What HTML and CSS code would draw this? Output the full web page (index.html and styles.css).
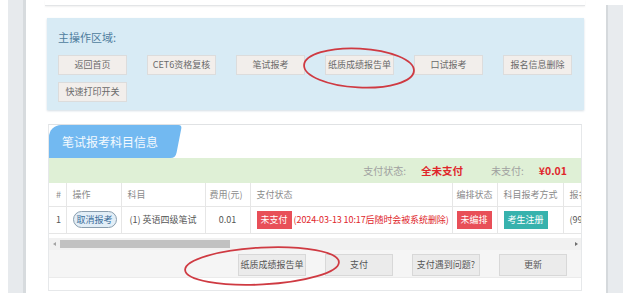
FILE: index.html
```html
<!DOCTYPE html>
<html lang="zh-CN">
<head>
<meta charset="utf-8">
<title>主操作区域</title>
<link rel="stylesheet" href="styles.css">
</head>
<body>
<div class="page">
  <div class="gutter-l"></div>
  <div class="rail-l"></div>
  <main class="main">
    <div class="topcard"></div>
    <section class="opbox">
      <div class="op-title">主操作区域:</div>
      <div class="op-buttons">
        <span class="btn">返回首页</span>
        <span class="btn">CET6资格复核</span>
        <span class="btn">笔试报考</span>
        <span class="btn">纸质成绩报告单</span>
        <span class="btn">口试报考</span>
        <span class="btn">报名信息删除</span>
        <span class="btn">快速打印开关</span>
      </div>
    </section>

    <section class="card">
      <div class="tab">
        <div class="tab-body">笔试报考科目信息</div>
        <svg class="tab-edge" width="12" height="33" viewBox="0 0 12 33"><path d="M0 0 H8.5 Q12 0 11.3 3.5 L6.6 27.5 Q5.6 33 0.5 33 H0 Z" fill="#72b9f1"/></svg>
      </div>
      <div class="paybar">
        <span class="pb-label">支付状态:</span>
        <span class="pb-value">全未支付</span>
        <span class="pb-label pb-gap">未支付:</span>
        <span class="pb-value">¥0.01</span>
      </div>
      <div class="tablewrap">
        <table class="grid">
          <colgroup>
            <col class="c1"><col class="c2"><col class="c3"><col class="c4"><col class="c5"><col class="c6"><col class="c7"><col class="c8">
          </colgroup>
          <thead>
            <tr><th>#</th><th>操作</th><th>科目</th><th class="tight">费用(元)</th><th>支付状态</th><th class="tight">编排状态</th><th>科目报考方式</th><th>报名时间</th></tr>
          </thead>
          <tbody>
            <tr>
              <td>1</td>
              <td><span class="pill">取消报考</span></td>
              <td class="center">(1) 英语四级笔试</td>
              <td class="center">0.01</td>
              <td class="nowrap"><span class="lbl red">未支付</span> <span class="warn">(2024-03-13 10:17后随时会被系统删除)</span></td>
              <td class="tight"><span class="lbl red">未编排</span></td>
              <td><span class="lbl teal">考生注册</span></td>
              <td class="nowrap">(9999)</td>
            </tr>
          </tbody>
        </table>
      </div>
      <div class="scrollbar">
        <span class="arrow left"></span>
        <span class="track"><span class="thumb"></span></span>
        <span class="arrow right"></span>
      </div>
      <div class="actions">
        <span class="btn2">纸质成绩报告单</span>
        <span class="btn2">支付</span>
        <span class="btn2">支付遇到问题?</span>
        <span class="btn2">更新</span>
      </div>
      <div class="card-foot"></div>
    </section>
  </main>
  <div class="rail-r"></div>
</div>
<svg class="marks" width="627" height="300" viewBox="0 0 627 300">
  <ellipse cx="359" cy="68" rx="55" ry="19.5" fill="none" stroke="#cf3a42" stroke-width="1.8" transform="rotate(3 359 68)"/>
  <ellipse cx="262" cy="266" rx="77" ry="18.5" fill="none" stroke="#cf3a42" stroke-width="1.8" transform="rotate(-3 262 266)"/>
</svg>
</body>
</html>
```
FILE: styles.css
```css
* { box-sizing: border-box; }
html, body { margin: 0; padding: 0; background: #fff; }
body {
  font-family: "Noto Sans CJK SC", "Noto Sans", "Liberation Sans", sans-serif;
  width: 627px;
  height: 300px;
  overflow: hidden;
  position: relative;
}
.page {
  display: flex;
  height: 300px;
}
.gutter-l { width: 8px; flex: none; }
.rail-l {
  width: 18px;
  flex: none;
  background: #e7eaed;
  border-right: 3px solid #d7dbde;
  margin-bottom: 7px;
}
.main {
  width: 580px;
  flex: none;
  padding: 0 22px 0 21px;
}
.rail-r {
  width: 17px;
  flex: none;
  background: #e8ebee;
  border-left: 2px solid #d5d9dc;
  margin: 5px 0 7px;
}
.topcard {
  height: 6px;
  margin: 0 -1px 0 -2px;
  border-bottom: 1px solid #e3e5e7;
  box-shadow: 0 1px 2px rgba(0,0,0,0.06);
}
.opbox {
  margin-top: 12px;
  height: 92px;
  background: #d8ebf5;
  padding: 12px 11px 8px;
  box-shadow: 0 1px 2px rgba(80,120,150,0.25);
}
.op-title {
  font-size: 11px;
  line-height: 14px;
  color: #4f7d9e;
}
.op-buttons {
  margin-top: 11px;
  display: flex;
  flex-wrap: wrap;
  column-gap: 20px;
  row-gap: 7px;
}
.btn {
  width: 69px;
  height: 20px;
  background: #f2eeeb;
  border: 1px solid #dcdcdc;
  font-size: 9px;
  line-height: 18px;
  text-align: center;
  color: #6a6a6a;
  white-space: nowrap;
}
.card {
  margin-top: 14px;
  margin-left: 1px;
  width: 534px;
  border: 1px solid #e6e8ea;
  border-top-color: #e0e2e4;
}
.tab {
  display: flex;
  height: 33px;
}
.tab-body {
  width: 121px;
  height: 33px;
  background: #72b9f1;
  border-top-left-radius: 12px;
  color: #f4f9fe;
  font-size: 12px;
  line-height: 33px;
  padding-left: 13px;
  white-space: nowrap;
}
.tab-edge { display: block; }
.paybar {
  height: 25px;
  background: #dff0d6;
  display: flex;
  justify-content: flex-end;
  align-items: center;
  padding-right: 14px;
  font-size: 10px;
}
.pb-label { color: #a0a0a0; margin-right: 15px; }
.pb-gap { margin-left: 28px; }
.pb-value { color: #e0262b; font-weight: bold; font-size: 10.5px; }
.tablewrap {
  overflow: hidden;
  width: 532px;
}
.grid {
  border-collapse: collapse;
  table-layout: fixed;
  width: 580px;
  font-size: 9px;
}
.c1 { width: 17px; }
.c2 { width: 55px; }
.c3 { width: 84px; }
.c4 { width: 45px; }
.c5 { width: 202px; }
.c6 { width: 45px; }
.c7 { width: 66px; }
.c8 { width: 66px; }
.grid th {
  height: 23px;
  font-weight: normal;
  color: #8a8a8a;
  text-align: left;
  padding: 0 0 0 6px;
  border-left: 1px solid #e6e6e6;
  border-bottom: 1px solid #e6e6e6;
  white-space: nowrap;
  overflow: hidden;
}
.grid td {
  height: 27px;
  color: #555;
  padding: 0 0 0 6px;
  border-left: 1px solid #e6e6e6;
  border-bottom: 1px solid #e6e6e6;
  white-space: nowrap;
  overflow: hidden;
}
.grid th:first-child, .grid td:first-child { border-left: none; padding-left: 7px; }
.grid .tight { padding-left: 4px; }
.grid td.center { text-align: center; padding-left: 0; }
.pill {
  display: inline-block;
  width: 44px;
  height: 17px;
  line-height: 15px;
  text-align: center;
  border: 1px solid #8a9eae;
  border-radius: 9px;
  background: #e2eef7;
  color: #3a6d9a;
  font-size: 9px;
}
.lbl {
  display: inline-block;
  height: 18px;
  line-height: 18px;
  padding: 0 4px;
  color: #fff;
  font-size: 9px;
}
.lbl.red { background: #e84f58; }
.lbl.teal { background: #37b2ad; }
.warn { color: #e0262b; font-size: 9px; letter-spacing: -0.1px; }
.scrollbar {
  margin-top: 4px;
  height: 12px;
  background: #f1f1f1;
  display: flex;
  align-items: center;
}
.arrow {
  width: 10px;
  flex: none;
  display: flex;
  justify-content: center;
}
.arrow.left::before {
  content: "";
  border-right: 3px solid #a3a3a3;
  border-top: 2.5px solid transparent;
  border-bottom: 2.5px solid transparent;
}
.arrow.right::before {
  content: "";
  border-left: 3px solid #6e6e6e;
  border-top: 2.5px solid transparent;
  border-bottom: 2.5px solid transparent;
}
.track {
  flex: 1;
  display: flex;
  padding-left: 1px;
}
.thumb {
  width: 170px;
  height: 8px;
  background: #c1c1c1;
}
.arrow.right { margin-left: auto; }
.actions {
  height: 28px;
  background: #f5f5f5;
  border-bottom: 1px solid #ebebeb;
  display: flex;
  justify-content: flex-end;
  align-items: flex-start;
  padding: 4px 14px 0 0;
  gap: 19px;
}
.btn2 {
  width: 68px;
  height: 22px;
  background: #ebebeb;
  border: 1px solid #d8d8d8;
  font-size: 9px;
  line-height: 20px;
  text-align: center;
  color: #555;
  white-space: nowrap;
}
.card-foot { height: 12px; }
.marks {
  position: absolute;
  left: 0;
  top: 0;
  pointer-events: none;
}
```
